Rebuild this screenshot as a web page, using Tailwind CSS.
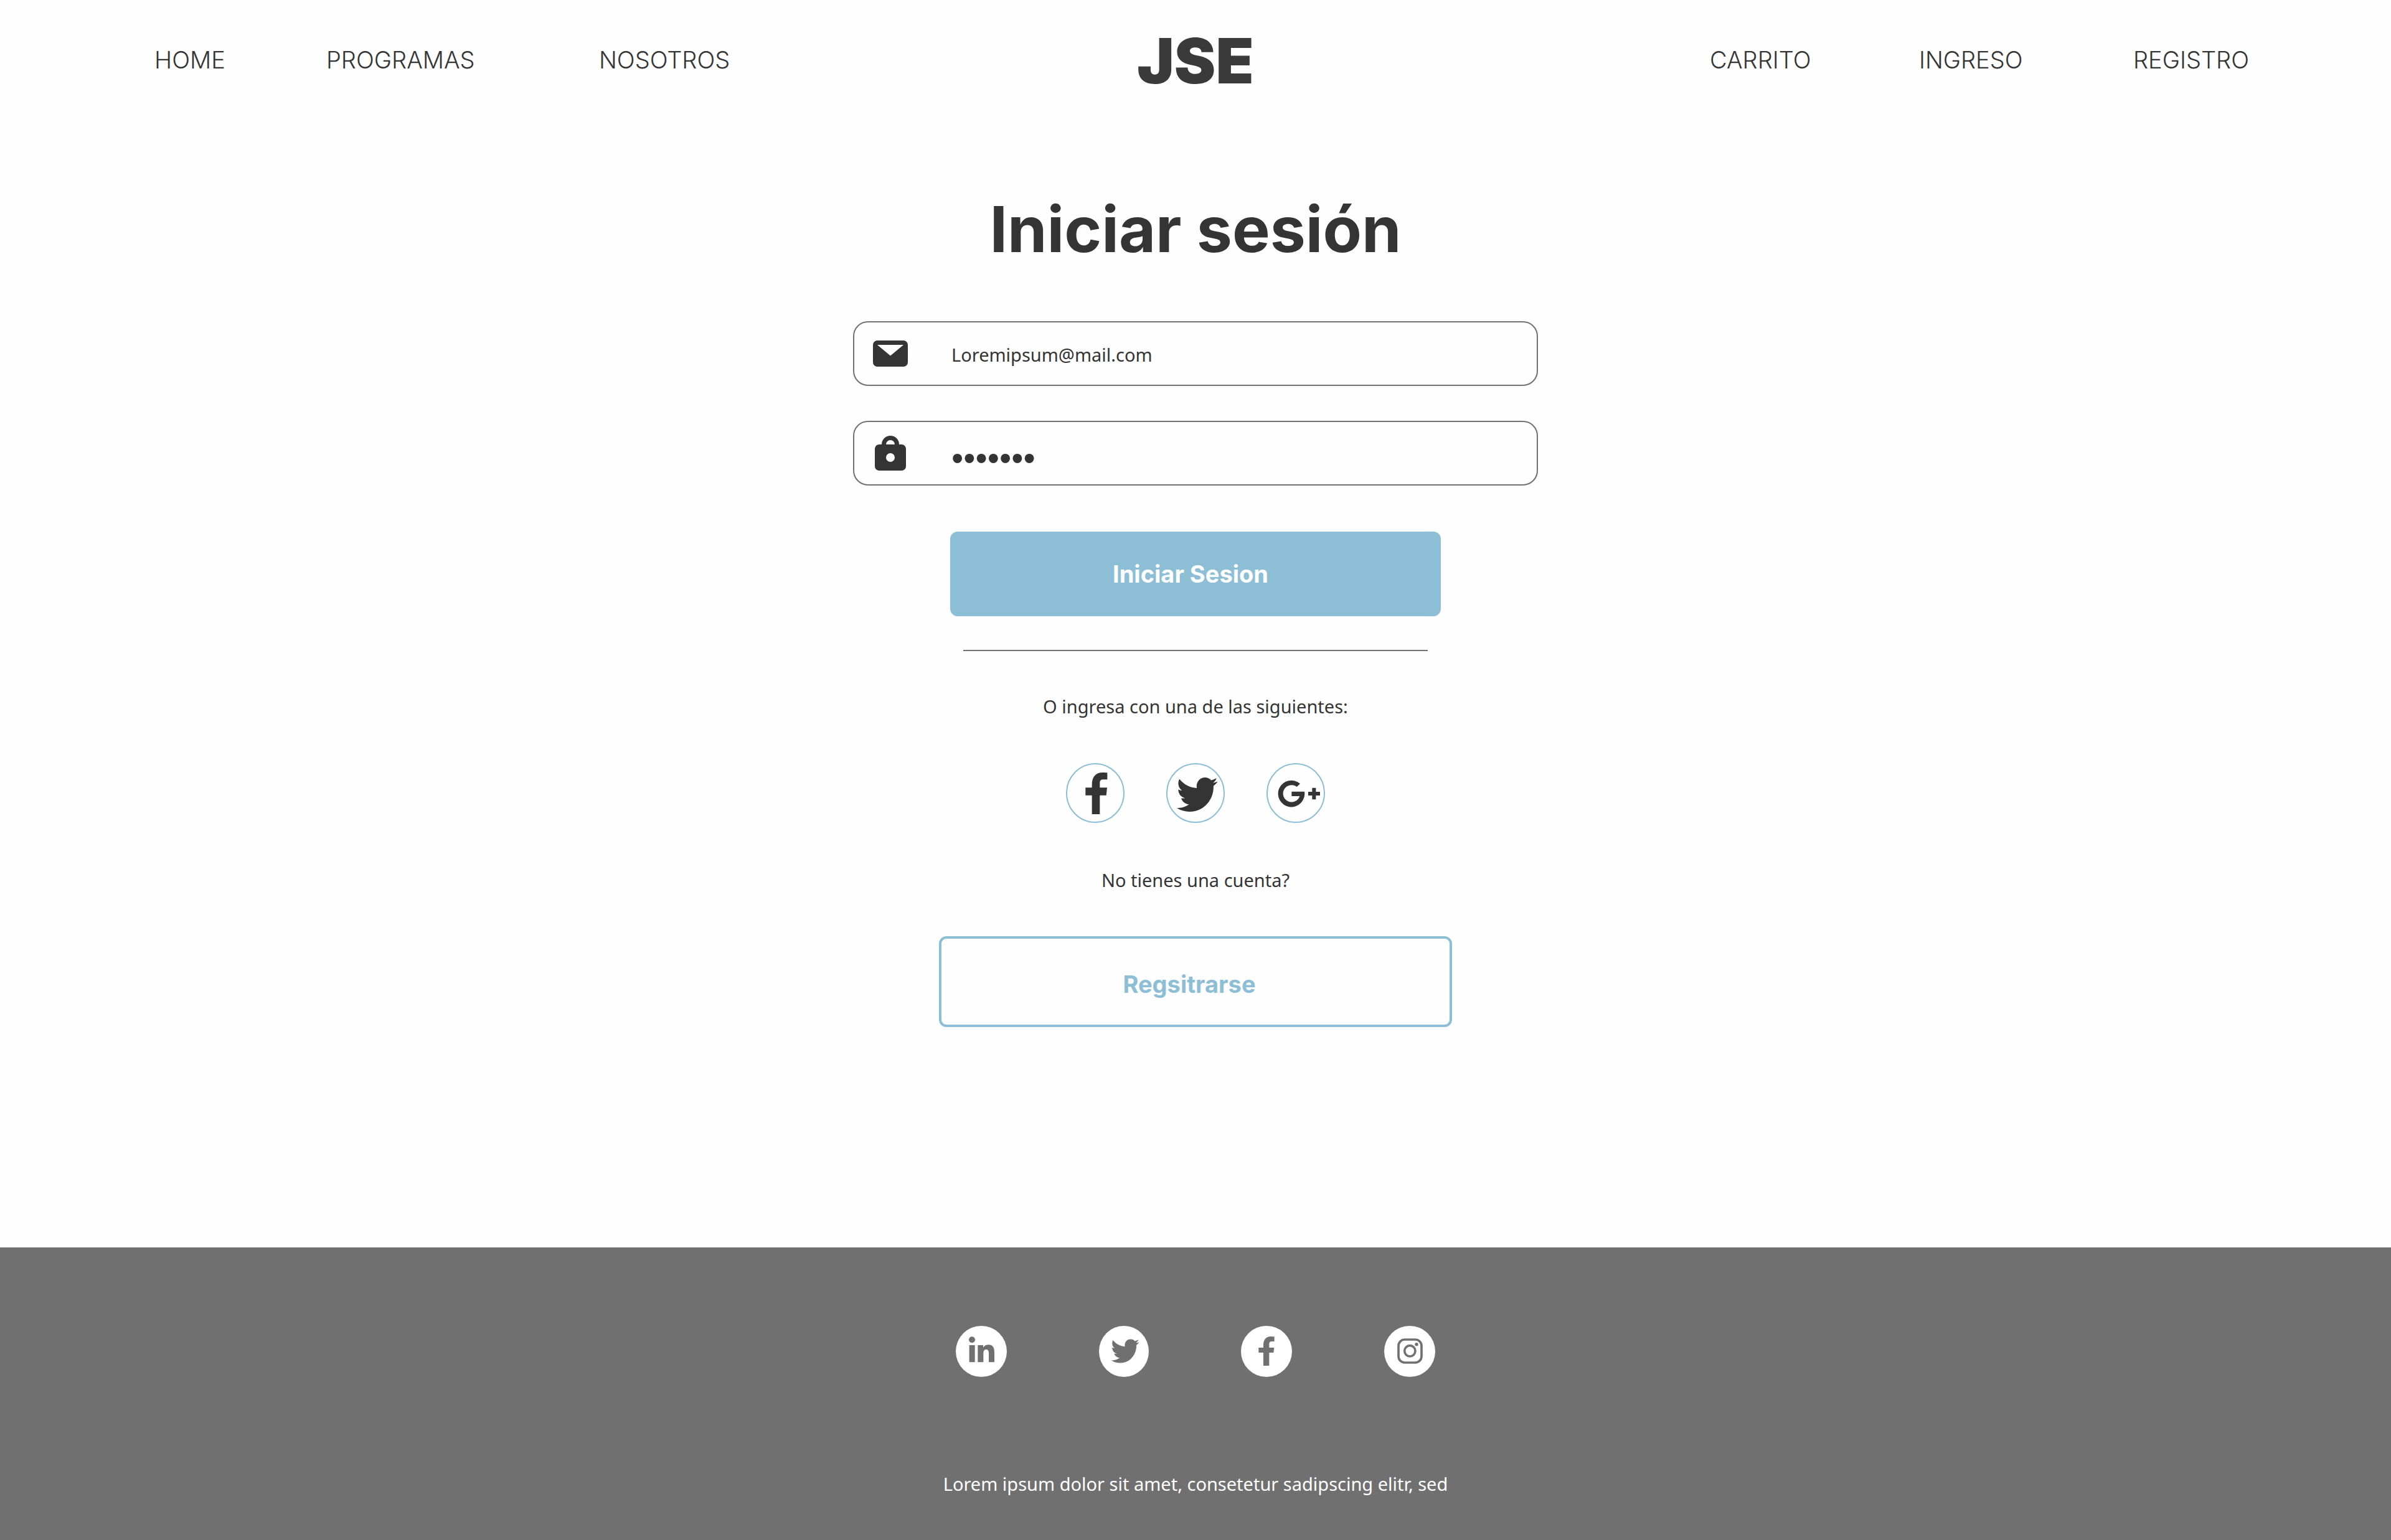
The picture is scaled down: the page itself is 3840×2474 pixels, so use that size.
<!DOCTYPE html>
<html lang="es">
<head>
<meta charset="utf-8">
<meta name="viewport" content="width=device-width, initial-scale=1">
<title>JSE - Iniciar sesión</title>
<script src="https://cdn.jsdelivr.net/npm/@tailwindcss/browser@4"></script>
</head>
<body class="flex min-h-screen flex-col bg-[#fefefe] font-['Noto_Sans',sans-serif] text-[29px] leading-[48px] text-[#343434]">
  <svg class="hidden" aria-hidden="true">
    <symbol id="bird" viewBox="0 48 512 416" preserveAspectRatio="none">
      <path d="M459.37 151.716c.325 4.548.325 9.097.325 13.645 0 138.72-105.583 298.558-298.558 298.558-59.452 0-114.68-17.219-161.137-47.106 8.447.974 16.568 1.299 25.34 1.299 49.055 0 94.213-16.568 130.274-44.832-46.132-.975-84.792-31.188-98.112-72.772 6.498.974 12.995 1.624 19.818 1.624 9.421 0 18.843-1.3 27.614-3.573-48.081-9.747-84.143-51.98-84.143-102.985v-1.299c13.969 7.797 30.214 12.67 47.431 13.319-28.264-18.843-46.781-51.005-46.781-87.391 0-19.492 5.197-37.36 14.294-52.954 51.655 63.675 129.3 105.258 216.365 109.807-1.624-7.797-2.599-15.918-2.599-24.04 0-57.828 46.782-104.934 104.934-104.934 30.213 0 57.502 12.67 76.67 33.137 23.715-4.548 46.456-13.32 66.599-25.34-7.798 24.366-24.366 44.833-46.132 57.827 21.117-2.273 41.584-8.122 60.426-16.243-14.292 20.791-32.161 39.308-52.628 54.253z"/>
    </symbol>
  </svg>

  <header class="grid grid-cols-[1fr_auto_1fr] items-center px-[228px] pt-10 font-['Inter',sans-serif]">
    <nav class="grid grid-cols-[276px_438px_auto] justify-start pb-1 pl-5 text-[38px] font-light" aria-label="Principal">
      <a href="#">HOME</a>
      <a href="#">PROGRAMAS</a>
      <a href="#">NOSOTROS</a>
    </nav>
    <a href="#" class="text-[100px] leading-[116px] font-black text-[#3a3a3a]">JSE</a>
    <nav class="grid grid-cols-[336px_344px_auto] justify-end pb-1 text-[38px] font-light" aria-label="Cuenta">
      <a href="#">CARRITO</a>
      <a href="#">INGRESO</a>
      <a href="#">REGISTRO</a>
    </nav>
  </header>

  <main class="flex grow flex-col items-center pt-[152px]">
    <h1 class="font-['Inter',sans-serif] text-[102px] leading-[120px] font-bold">Iniciar sesión</h1>

    <form class="mt-[88px] flex w-[1100px] max-w-full flex-col items-center" action="#">
      <label class="flex h-[104px] w-full items-center rounded-[24px] border-2 border-[#707070] pl-[30px]">
        <svg class="h-[42px] w-[56px]" viewBox="0 0 56 42" fill="currentColor" role="img" aria-label="Correo"><path fill-rule="evenodd" d="M7 0H49A7 7 0 0 1 56 7V35A7 7 0 0 1 49 42H7A7 7 0 0 1 0 35V7A7 7 0 0 1 7 0ZM7 7L28 24.500L49 7Z"/></svg>
        <input type="email" value="Loremipsum@mail.com" class="ml-[70px] grow bg-transparent pt-1 outline-none">
      </label>
      <label class="mt-14 flex h-[104px] w-full items-center rounded-[24px] border-2 border-[#707070] pl-[30px]">
        <svg class="h-[56px] w-[56px]" viewBox="0 0 56 56" fill="currentColor" role="img" aria-label="Contraseña"><path fill-rule="evenodd" d="M10 14H14A14 14 0 0 1 42 14H46A7 7 0 0 1 53 21V49A7 7 0 0 1 46 56H10A7 7 0 0 1 3 49V21A7 7 0 0 1 10 14ZM21 14H35A7 7 0 0 0 21 14ZM28 28A7 7 0 1 0 28 42A7 7 0 1 0 28 28Z"/></svg>
        <input type="password" value="lorem12" class="ml-[70px] grow bg-transparent pt-4 font-['Liberation_Sans',sans-serif] text-[55px] outline-none">
      </label>
      <button type="submit" class="mt-[74px] h-[136px] w-[788px] max-w-full rounded-[12px] bg-[#8cbed6] pr-4 font-['Inter',sans-serif] text-[38px] font-bold text-white">Iniciar Sesion</button>
    </form>

    <hr class="mt-[54px] w-[746px] max-w-full border-t-2 border-[#707070]">
    <p class="mt-[65px]">O ingresa con una de las siguientes:</p>

    <div class="mt-[67px] flex gap-[67px]">
      <a href="#" aria-label="Facebook">
        <svg class="h-[96px] w-[94px]" viewBox="0 0 282 288" fill="currentColor"><ellipse cx="141" cy="144" rx="138" ry="141" fill="none" stroke="#8cbed6" stroke-width="6"/><path d="M125 246V155H94V118H125V105C125 66 142 45 178 45C186 45 194 46 199 46V79H180C167 79 163 85 163 96V118H198L194 155H163V246Z"/></svg>
      </a>
      <a href="#" aria-label="Twitter">
        <svg class="h-[96px] w-[94px]" viewBox="0 0 282 288" fill="currentColor"><ellipse cx="141" cy="144" rx="138" ry="141" fill="none" stroke="#8cbed6" stroke-width="6"/><use href="#bird" x="50" y="69" width="198" height="165"/></svg>
      </a>
      <a href="#" aria-label="Google Plus">
        <svg class="h-[96px] w-[94px]" viewBox="0 0 282 288" fill="currentColor"><ellipse cx="141" cy="144" rx="138" ry="141" fill="none" stroke="#8cbed6" stroke-width="6"/><path d="M162 99A64 64 0 1 0 183 137H121V159H160A41 41 0 1 1 146 114ZM220 119H238V138H258V156H238V175H220V156H201V138H220Z"/></svg>
      </a>
    </div>

    <p class="mt-[68px]">No tienes una cuenta?</p>
    <button type="button" class="mt-[66px] mb-[100px] h-[146px] w-[824px] max-w-full rounded-[12px] border-4 border-[#8cbed6] pt-2 pr-5 font-['Inter',sans-serif] text-[38px] font-bold text-[#8cbed6]">Regsitrarse</button>
  </main>

  <footer class="flex flex-col items-center bg-[#707070] pt-[126px] pb-[66px] text-white">
    <div class="flex gap-[148px]">
      <a href="#" aria-label="LinkedIn">
        <svg class="size-[82px]" viewBox="0 0 246 246"><circle cx="123" cy="123" r="123" fill="#fff"/><g fill="#707070"><circle cx="78" cy="67" r="15"/><path d="M65 93H92V175H65ZM106 93H132V104C138 95 147 91 158 91C180 91 186 106 186 128V175H159V133C159 122 156 114 147 114C136 114 133 122 133 133V175H106Z"/></g></svg>
      </a>
      <a href="#" aria-label="Twitter">
        <svg class="h-[82px] w-[80px]" viewBox="0 0 240 246"><ellipse cx="120" cy="123" rx="120" ry="123" fill="#fff"/><use href="#bird" x="58" y="64" width="136" height="115" fill="#707070"/></svg>
      </a>
      <a href="#" aria-label="Facebook">
        <svg class="size-[82px]" viewBox="0 0 246 246"><circle cx="123" cy="123" r="123" fill="#fff"/><path fill="#707070" d="M108 192V129H85V105H108V90C108 66 122 51 144 51C150 51 156 52 161 52V75H150C139 75 136 80 136 88V105H160L157 129H136V192Z"/></svg>
      </a>
      <a href="#" aria-label="Instagram">
        <svg class="size-[82px]" viewBox="0 0 246 246"><circle cx="123" cy="123" r="123" fill="#fff"/><g fill="none" stroke="#707070" stroke-width="11"><rect x="69" y="66" width="111" height="111" rx="30"/><circle cx="124" cy="121" r="26"/></g><circle cx="156" cy="89" r="8" fill="#707070"/></svg>
      </a>
    </div>
    <p class="mt-[148px]">Lorem ipsum dolor sit amet, consetetur sadipscing elitr, sed</p>
  </footer>
</body>
</html>
